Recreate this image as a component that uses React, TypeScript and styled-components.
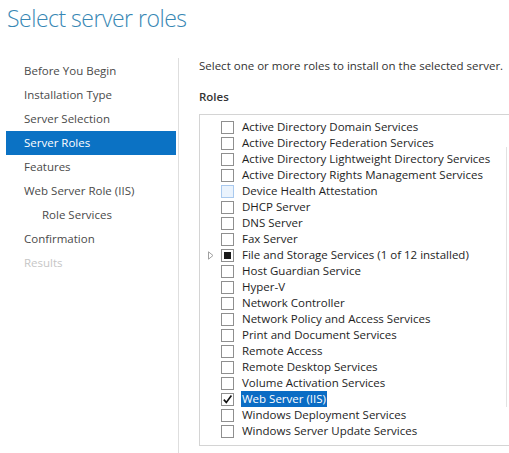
import { createGlobalStyle, styled } from 'styled-components';

const GlobalStyle = createGlobalStyle`
  html, body {
    margin: 0;
    padding: 0;
    background: #ffffff;
  }
  body {
    font-family: "Open Sans", "Noto Sans", sans-serif;
    font-size: 11.5px;
    color: #1e1e1e;
  }
`;

type Step = { label: string; indent?: boolean; active?: boolean; disabled?: boolean };

const steps: Step[] = [
  { label: 'Before You Begin' },
  { label: 'Installation Type' },
  { label: 'Server Selection' },
  { label: 'Server Roles', active: true },
  { label: 'Features' },
  { label: 'Web Server Role (IIS)' },
  { label: 'Role Services', indent: true },
  { label: 'Confirmation' },
  { label: 'Results', disabled: true },
];

type CheckState = 'off' | 'on' | 'partial' | 'hover';
type Role = { name: string; state?: CheckState; expandable?: boolean; selected?: boolean };

const roles: Role[] = [
  { name: 'Active Directory Domain Services' },
  { name: 'Active Directory Federation Services' },
  { name: 'Active Directory Lightweight Directory Services' },
  { name: 'Active Directory Rights Management Services' },
  { name: 'Device Health Attestation', state: 'hover' },
  { name: 'DHCP Server' },
  { name: 'DNS Server' },
  { name: 'Fax Server' },
  { name: 'File and Storage Services (1 of 12 installed)', state: 'partial', expandable: true },
  { name: 'Host Guardian Service' },
  { name: 'Hyper-V' },
  { name: 'Network Controller' },
  { name: 'Network Policy and Access Services' },
  { name: 'Print and Document Services' },
  { name: 'Remote Access' },
  { name: 'Remote Desktop Services' },
  { name: 'Volume Activation Services' },
  { name: 'Web Server (IIS)', state: 'on', selected: true },
  { name: 'Windows Deployment Services' },
  { name: 'Windows Server Update Services' },
];

const App = () => {
  return (
    <>
      <GlobalStyle />
      <StPage>
        <StTitle>Select server roles</StTitle>
        <StBody>
          <StSidebar>
            {steps.map((step) => (
              <StStep
                key={step.label}
                $active={!!step.active}
                $indent={!!step.indent}
                $disabled={!!step.disabled}
              >
                {step.label}
              </StStep>
            ))}
          </StSidebar>
          <StContent>
            <StIntro>Select one or more roles to install on the selected server.</StIntro>
            <StHeading>Roles</StHeading>
            <StListBox>
              <StList>
                {roles.map((role) => (
                  <StRow key={role.name}>
                    <StExpander>
                      {role.expandable && (
                        <svg width="6" height="9" viewBox="0 0 6 9">
                          <path d="M0.5 0.8 L5 4.5 L0.5 8.2 Z" fill="none" stroke="#a0a0a0" strokeWidth="1" />
                        </svg>
                      )}
                    </StExpander>
                    <StCheckbox $state={role.state ?? 'off'}>
                      {role.state === 'partial' && <StPartialMark />}
                      {role.state === 'on' && (
                        <svg width="11" height="11" viewBox="0 0 11 11">
                          <path d="M1.8 5.6 L4.3 8.4 L9.4 1.6" fill="none" stroke="#111" strokeWidth="1.6" />
                        </svg>
                      )}
                    </StCheckbox>
                    <StRoleName $selected={!!role.selected}>{role.name}</StRoleName>
                  </StRow>
                ))}
              </StList>
              <StScrollTrack>
                <StScrollThumb />
              </StScrollTrack>
            </StListBox>
          </StContent>
        </StBody>
      </StPage>
    </>
  );
};

export default App;

const StPage = styled.div`
  width: 509px;
  height: 453px;
  overflow: hidden;
`;

const StTitle = styled.h1`
  margin: 0;
  height: 58px;
  padding: 1px 0 0 7px;
  box-sizing: border-box;

  font-family: "Open Sans", "Noto Sans", sans-serif;
  font-weight: 300;
  font-size: 23px;
  letter-spacing: -0.5px;
  line-height: 34px;
  color: #3787b4;
  white-space: nowrap;
`;

const StBody = styled.div`
  display: flex;
  height: 395px;
`;

const StSidebar = styled.nav`
  display: flex;
  flex-direction: column;
  flex: 0 0 179px;
  padding-top: 1px;
  border-right: 1px solid #dedede;
  box-sizing: border-box;
`;

const StStep = styled.div<{ $active: boolean; $indent: boolean; $disabled: boolean }>`
  width: 170px;
  height: 24px;
  margin-left: 6px;
  padding-left: ${({ $indent }) => ($indent ? '36px' : '18px')};
  box-sizing: border-box;

  font-size: 11.5px;
  line-height: 24px;
  white-space: nowrap;
  background: ${({ $active }) => ($active ? '#0b72c4' : 'transparent')};
  color: ${({ $active, $disabled }) =>
    $active ? '#ffffff' : $disabled ? '#c6c6c6' : '#4a4a4a'};
`;

const StContent = styled.main`
  display: flex;
  flex-direction: column;
  padding-left: 20px;
`;

const StIntro = styled.p`
  margin: 0;
  height: 16px;
  line-height: 16px;
  color: #333333;
  white-space: nowrap;
`;

const StHeading = styled.h2`
  margin: 15px 0 0;
  height: 16px;
  font-size: 11.5px;
  font-weight: 600;
  line-height: 16px;
  color: #333333;
`;

const StListBox = styled.div`
  display: flex;
  width: 326px;
  height: 332px;
  margin-top: 9px;
  border: 1px solid #d4d4d4;
  box-sizing: border-box;
`;

const StList = styled.ul`
  flex: 1;
  margin: 0;
  padding: 4px 0 0;
  list-style: none;
`;

const StRow = styled.li`
  display: flex;
  align-items: center;
  height: 16px;
`;

const StExpander = styled.span`
  display: flex;
  align-items: center;
  justify-content: center;
  width: 21px;
  padding-left: 1px;
  box-sizing: border-box;
`;

const StCheckbox = styled.span<{ $state: CheckState }>`
  display: flex;
  align-items: center;
  justify-content: center;
  width: 13px;
  height: 13px;
  box-sizing: border-box;
  margin-right: 8px;

  border: 1px solid ${({ $state }) => ($state === 'hover' ? '#a9c9ee' : '#8f8f8f')};
  background: ${({ $state }) => ($state === 'hover' ? '#eaf3fd' : '#ffffff')};
`;

const StPartialMark = styled.span`
  width: 7px;
  height: 7px;
  background: #1a1a1a;
`;

const StRoleName = styled.span<{ $selected: boolean }>`
  height: 16px;
  padding: 0 1px;
  margin-left: -1px;
  line-height: 16px;
  white-space: nowrap;
  background: ${({ $selected }) => ($selected ? '#0a6cc4' : 'transparent')};
  color: ${({ $selected }) => ($selected ? '#ffffff' : '#1e1e1e')};
`;

const StScrollTrack = styled.div`
  flex: 0 0 18px;
  padding-top: 32px;
`;

const StScrollThumb = styled.div`
  height: 260px;
  border-left: 1px solid #e2e2e2;
`;
